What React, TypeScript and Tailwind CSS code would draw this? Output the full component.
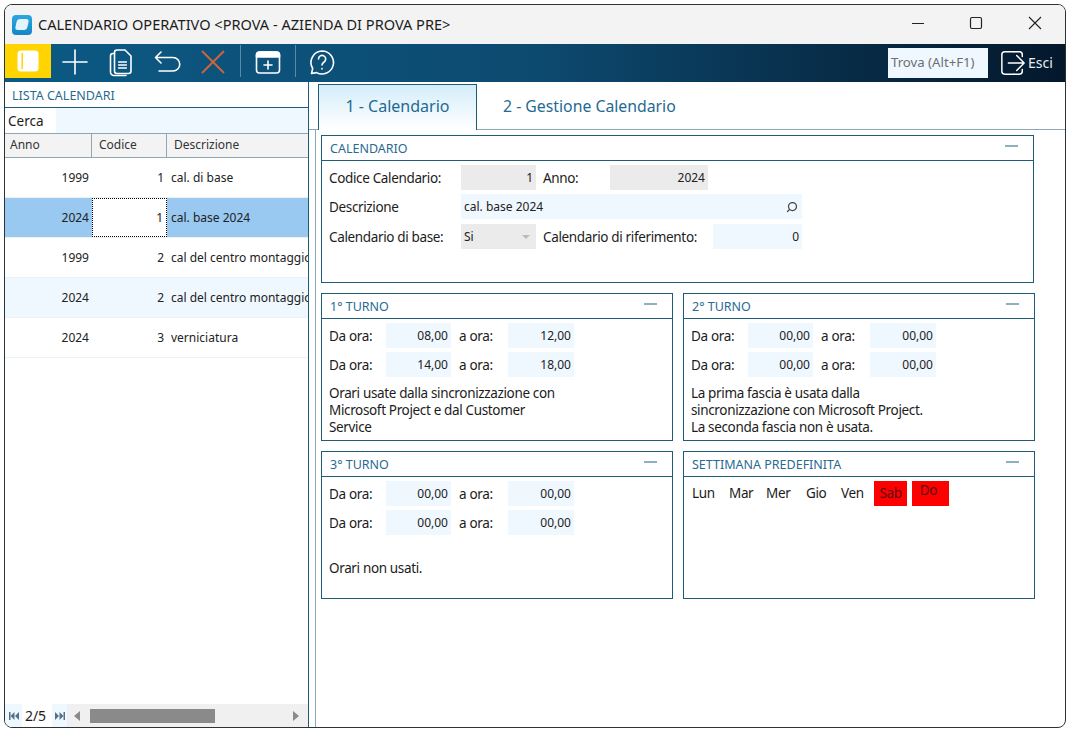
import { ReactNode } from 'react';
import { Search } from 'lucide-react';

const uiFont = "font-['Noto_Sans','Open_Sans',sans-serif]";
const dataFont = "font-['DejaVu_Sans',sans-serif]";

const rows = [
  { anno: '1999', codice: '1', descr: 'cal. di base' },
  { anno: '2024', codice: '1', descr: 'cal. base 2024', selected: true },
  { anno: '1999', codice: '2', descr: 'cal del centro montaggio' },
  { anno: '2024', codice: '2', descr: 'cal del centro montaggio', alt: true },
  { anno: '2024', codice: '3', descr: 'verniciatura' },
];

const Field = ({ w, value, gray, left, children }: { w: string; value: string; gray?: boolean; left?: boolean; children?: ReactNode }) => (
  <div className={`${w} h-[25px] flex items-center shrink-0 px-[3px] text-[12px] tracking-normal text-[#222] ${dataFont} ${gray ? 'bg-[#ebebeb]' : 'bg-[#f0f8ff]'} ${left ? 'justify-between' : 'justify-end'}`}>
    <span>{value}</span>
    {children}
  </div>
);

const Panel = ({ title, w, h, children }: { title: string; w: string; h: string; children: ReactNode }) => (
  <div className={`${w} ${h} border border-[#1f5c78] shrink-0 bg-white`}>
    <div className="h-[25px] border-b border-[#1f5c78] flex items-center justify-between pl-[8px] pr-[15px]">
      <span className={`text-[12.500px] text-[#2a6a92] pt-[2px] ${uiFont}`}>{title}</span>
      <div className="w-[13px] h-[2px] bg-[#8fb0bf] mb-[5px]" />
    </div>
    <div className={`pl-[7px] pt-[4px] text-[13.500px] tracking-[-0.35px] text-[#1c1c1c] ${uiFont}`}>{children}</div>
  </div>
);

const TurnoRow = ({ a, b }: { a: string; b: string }) => (
  <div className="flex items-center h-[25px] mb-[4px] [&>span]:pt-px">
    <span className="w-[57px]">Da ora:</span>
    <Field w="w-[65px]" value={a} />
    <span className="w-[57px] pl-[8px]">a ora:</span>
    <Field w="w-[66px]" value={b} />
  </div>
);

const Turno = ({ title, values, lines, pad }: { title: string; values: string[]; lines: string[]; pad?: boolean }) => (
  <Panel title={title} w="w-[352px]" h="h-[148px]">
    <TurnoRow a={values[0]} b={values[1]} />
    <TurnoRow a={values[2]} b={values[3]} />
    <div className={`leading-[17px] ${pad ? 'mt-[25px]' : 'mt-[8px]'}`}>
      {lines.map((l) => (
        <div key={l}>{l}</div>
      ))}
    </div>
  </Panel>
);

const ToolIcon = ({ children }: { children: ReactNode }) => (
  <svg viewBox="0 0 32 32" className="w-[32px] h-[32px] mb-[2px]" fill="none" stroke="currentColor" strokeWidth="1.6" strokeLinecap="round" strokeLinejoin="round">
    {children}
  </svg>
);

const SkipIcon = ({ flip }: { flip?: boolean }) => (
  <svg viewBox="0 0 10 8" className={`w-[10px] h-[8px] text-[#54708a] ${flip ? '-scale-x-100' : ''}`} fill="currentColor">
    <rect x="0" y="0" width="1.500" height="8" />
    <path d="M5.500 0v8L1.500 4zM10 0v8L6 4z" />
  </svg>
);

export default function App() {
  return (
    <div className={`w-[1070px] h-[731px] bg-white pl-[4px] pt-[4px] overflow-hidden ${uiFont}`}>
      <div className="w-[1062px] h-[724px] border border-[#2a3338] rounded-[8px] overflow-hidden flex flex-col">
        {/* barra titolo */}
        <div className="h-[39px] shrink-0 bg-[#f3f3f3] flex items-center pl-[7px]">
          <div className="w-[20px] h-[20px] rounded-[4px] bg-gradient-to-b from-[#2aa8e2] to-[#1487c4] flex items-center justify-center">
            <div className="w-[12px] h-[11px] rounded-[3px] bg-[#e4f4fc] -skew-x-12" />
          </div>
          <span className="ml-[6px] text-[14.560px] text-[#1c1c1c]">CALENDARIO OPERATIVO &lt;PROVA - AZIENDA DI PROVA PRE&gt;</span>
          <div className="ml-auto flex items-center gap-[12px] mr-[7px] mb-[3px] text-[#222]">
            <svg viewBox="0 0 46 30" className="w-[46px] h-[30px]" stroke="currentColor" fill="none" strokeWidth="1">
              <path d="M17 15.500h12" />
            </svg>
            <svg viewBox="0 0 46 30" className="w-[46px] h-[30px]" stroke="currentColor" fill="none" strokeWidth="1.200">
              <rect x="17.500" y="9.500" width="11" height="11" rx="1.500" />
            </svg>
            <svg viewBox="0 0 46 30" className="w-[46px] h-[30px] ml-px" stroke="currentColor" fill="none" strokeWidth="1.100">
              <path d="M17 9l12 12M29 9L17 21" />
            </svg>
          </div>
        </div>

        {/* toolbar */}
        <div className="h-[38px] shrink-0 bg-gradient-to-r from-[#0b5a85] via-[#0d4a70] to-[#04182c] flex items-center text-white">
          <div className="w-[46px] h-[34px] mb-[4px] bg-[#ffd400] flex items-center justify-center">
            <svg viewBox="0 0 22 22" className="w-[22px] h-[22px]">
              <rect x="0.500" y="0.500" width="21" height="21" rx="3.500" fill="#fff" />
              <rect x="4.500" y="3" width="1.500" height="16" fill="#ffd400" />
            </svg>
          </div>
          <div className="flex items-center ml-[8px] text-white">
            <ToolIcon><path d="M16 4v24M4 16h24" /></ToolIcon>
            <div className="ml-[13px]">
              <ToolIcon>
                <path d="M13 4h8l6 6v15a2.500 2.500 0 0 1-2.500 2.500H13a2.500 2.500 0 0 1-2.500-2.500V6.500A2.500 2.500 0 0 1 13 4z" />
                <path d="M10.500 7.500H9A2.500 2.500 0 0 0 6.500 10v16A3.500 3.500 0 0 0 10 29.500h12" />
                <path d="M14.500 16h8M14.500 19h8M14.500 22h8" strokeWidth="1.300" />
              </ToolIcon>
            </div>
            <div className="ml-[15px]">
              <ToolIcon><path d="M10 6L4.500 11.500 10 17M5 11.500h17a6 6 0 0 1 0 13.500H8" /></ToolIcon>
            </div>
            <svg viewBox="0 0 32 32" className="w-[32px] h-[32px] ml-[14px] mb-[2px] text-[#d2643a]" fill="none" stroke="currentColor" strokeWidth="1.800">
              <path d="M5 5l22 22M27 5L5 27" />
            </svg>
          </div>
          <div className="w-px h-[32px] mb-[4px] bg-[#5d8aa3] ml-[11px]" />
          <div className="ml-[11px]">
            <ToolIcon>
              <rect x="4.500" y="6" width="23" height="21" rx="3" />
              <path d="M4.500 11V9a3 3 0 0 1 3-3h17a3 3 0 0 1 3 3v2z" fill="currentColor" />
              <path d="M16 15v8M12 19h8" />
            </ToolIcon>
          </div>
          <div className="w-px h-[32px] mb-[4px] bg-[#5d8aa3] ml-[11px]" />
          <div className="ml-[10px]">
            <ToolIcon>
              <path d="M16 5a11.500 11.500 0 1 1-5.500 21.600L5.500 27.500l1.200-5A11.500 11.500 0 0 1 16 5z" />
              <path d="M12.500 13a3.600 3.600 0 1 1 5.600 3c-1.400.9-2.100 1.600-2.100 3" />
              <path d="M16 22.500v.5" />
            </ToolIcon>
          </div>
          <div className="ml-auto flex items-center mb-[1px]">
            <div className="w-[100px] h-[30px] bg-[#f0f8ff] flex items-center pl-[3px] text-[13.200px] text-[#6b6f73]">Trova (Alt+F1)</div>
            <svg viewBox="0 0 28 28" className="w-[26px] h-[26px] ml-[12px]" fill="none" stroke="currentColor" strokeWidth="1.600" strokeLinecap="round" strokeLinejoin="round">
              <path d="M15 2H5a3 3 0 0 0-3 3v18a3 3 0 0 0 3 3h10" />
              <path d="M9 14h16M18 6l8 8-8 8M15 2h6a3 3 0 0 1 3 3v2M15 26h6a3 3 0 0 0 3-3v-2" />
            </svg>
            <span className="ml-[2px] mr-[12px] w-[25px] text-[14px] text-[#e8eef2]">Esci</span>
          </div>
        </div>

        {/* corpo */}
        <div className="flex-1 flex min-h-0">
          {/* lista calendari */}
          <div className="w-[304px] shrink-0 border-r border-[#1f5c78] flex flex-col">
            <div className="h-[26px] shrink-0 border-b border-[#1f5c78] flex items-center pl-[7px] pt-[3px] text-[12.500px] text-[#2a6a92]">LISTA CALENDARI</div>
            <div className="h-[25px] shrink-0 flex items-center">
              <span className="w-[51px] pl-[3px] pt-px text-[13.500px] text-[#1c1c1c]">Cerca</span>
              <div className="flex-1 h-full bg-[#f0f8ff]" />
            </div>
            <div className="h-[25px] shrink-0 bg-[#f3f3f3] border-y border-[#8fa6b5] flex text-[12px] text-[#333]">
              <div className="w-[87px] pl-[5px] pb-[2px] border-r border-[#8fa6b5] flex items-center">Anno</div>
              <div className="w-[75px] pl-[7px] pb-[2px] border-r border-[#8fa6b5] flex items-center">Codice</div>
              <div className="flex-1 pl-[7px] pb-[2px] flex items-center">Descrizione</div>
            </div>
            <div className={`flex-1 text-[12px] text-[#222] ${dataFont}`}>
              {rows.map((r, i) => (
                <div key={i} className={`h-[40px] flex items-center border-b border-[#eef1f3] ${r.selected ? 'bg-[#99c8f0]' : r.alt ? 'bg-[#f0f8ff]' : 'bg-white'}`}>
                  <div className="w-[84px] text-right">{r.anno}</div>
                  <div className={`w-[75px] ml-[3px] h-full flex items-center justify-end pr-[3px] ${r.selected ? 'bg-white border border-dotted border-black' : ''}`}>{r.codice}</div>
                  <div className="ml-[4px] flex-1 whitespace-nowrap overflow-hidden">{r.descr}</div>
                </div>
              ))}
            </div>
            <div className="h-[23px] shrink-0 flex items-center">
              <div className="w-[17px] h-full flex items-center justify-center bg-[#f0f8ff]"><SkipIcon /></div>
              <span className="w-[30px] pr-[3px] text-center text-[14px] text-[#1c1c1c]">2/5</span>
              <div className="w-[15px] h-full flex items-center justify-center bg-[#f0f8ff]"><SkipIcon flip /></div>
              <div className="flex-1 h-full bg-[#f0f0f0] flex items-center">
                <div className="ml-[7px] w-0 h-0 border-y-[5px] border-y-transparent border-r-[6px] border-r-[#8a8a8a]" />
                <div className="ml-[10px] w-[125px] h-[14px] bg-[#8a8a8a]" />
                <div className="ml-auto mr-[9px] w-0 h-0 border-y-[5px] border-y-transparent border-l-[6px] border-l-[#8a8a8a]" />
              </div>
            </div>
          </div>

          {/* dettaglio */}
          <div className="flex-1 flex flex-col min-w-0">
            <div className="h-[48px] shrink-0 border-b border-[#8fa6b5] pl-[9px] flex items-end">
              <div className="w-[159px] h-[46px] border border-b-0 border-[#1f5c78] bg-gradient-to-b from-[#d4edfa] to-white flex items-center justify-center pb-[3px] text-[16px] text-[#1f6a92] -mb-px">1 - Calendario</div>
              <div className="ml-[26px] h-[46px] pt-[2px] flex items-center text-[15.800px] text-[#1f6a92]">2 - Gestione Calendario</div>
            </div>
            <div className="flex-1 ml-[6px] border-l border-[#8fa6b5] pl-[5px] pt-[5px]">
              <Panel title="CALENDARIO" w="w-[713px]" h="h-[148px]">
                <div className="flex items-center h-[25px] [&>span]:pt-px">
                  <span className="w-[132px]">Codice Calendario:</span>
                  <Field w="w-[75px]" value="1" gray />
                  <span className="w-[74px] pl-[7px]">Anno:</span>
                  <Field w="w-[98px]" value="2024" gray />
                </div>
                <div className="flex items-center h-[25px] mt-[4px] [&>span]:pt-px">
                  <span className="w-[132px]">Descrizione</span>
                  <Field w="w-[341px]" value="cal. base 2024" left>
                    <Search className="w-[12px] h-[12px] mr-[1px] text-[#444] -scale-x-100" strokeWidth={2.500} />
                  </Field>
                </div>
                <div className="flex items-center h-[25px] mt-[5px] [&>span]:pt-px">
                  <span className="w-[132px]">Calendario di base:</span>
                  <Field w="w-[75px]" value="Si" gray left>
                    <div className="w-0 h-0 mr-[3px] border-x-[4px] border-x-transparent border-t-[4px] border-t-[#bbbbbb]" />
                  </Field>
                  <span className="w-[177px] pl-[7px]">Calendario di riferimento:</span>
                  <Field w="w-[89px]" value="0" />
                </div>
              </Panel>
              <div className="flex gap-[10px] mt-[10px]">
                <Turno title="1° TURNO" values={['08,00', '12,00', '14,00', '18,00']} lines={['Orari usate dalla sincronizzazione con', 'Microsoft Project e dal Customer', 'Service']} />
                <Turno title="2° TURNO" values={['00,00', '00,00', '00,00', '00,00']} lines={['La prima fascia è usata dalla', 'sincronizzazione con Microsoft Project.', 'La seconda fascia non è usata.']} />
              </div>
              <div className="flex gap-[10px] mt-[10px]">
                <Turno title="3° TURNO" values={['00,00', '00,00', '00,00', '00,00']} lines={['Orari non usati.']} pad />
                <Panel title="SETTIMANA PREDEFINITA" w="w-[352px]" h="h-[148px]">
                  <div className="flex items-center h-[25px]">
                    <span className="w-[38px] pl-px">Lun</span>
                    <span className="w-[37px]">Mar</span>
                    <span className="w-[40px]">Mer</span>
                    <span className="w-[35px]">Gio</span>
                    <span className="w-[33px]">Ven</span>
                    <span className="w-[33px] h-[25px] bg-[#ff0000] text-center leading-[25px] text-[#5a1010]">Sab</span>
                    <span className="w-[37px] h-[25px] ml-[5px] pr-[4px] bg-[#ff0000] text-center leading-[19px] text-[#5a1010]">Do</span>
                  </div>
                </Panel>
              </div>
            </div>
          </div>
        </div>
      </div>
    </div>
  );
}
